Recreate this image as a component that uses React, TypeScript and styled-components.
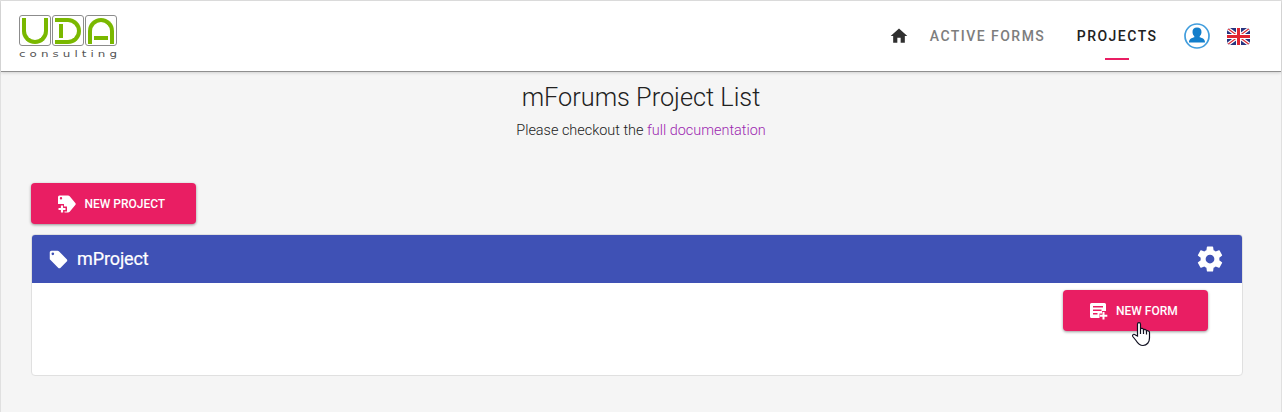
import React from "react";
import styled, { createGlobalStyle } from "styled-components";

const Global = createGlobalStyle`
  * { box-sizing: border-box; }
  body { margin: 0; background: #f5f5f5; font-family: Roboto, "Liberation Sans", sans-serif; overflow: hidden; }
`;

const Page = styled.div`
  height: 412px;
  border: 1px solid #e0e0e0;
  border-bottom: 0;
  background: #f5f5f5;
`;

const Header = styled.header`
  height: 71px;
  display: flex;
  align-items: center;
  justify-content: space-between;
  padding: 0 31px 0 18px;
  background: #fff;
  border-bottom: 1px solid #8f8f8f;
  box-shadow: 0 1px 3px rgba(0, 0, 0, 0.15);
`;

const Logo = styled.div`
  display: flex;
  flex-direction: column;
  width: 98px;
  height: 46px;
  margin-top: 4px;
`;

const LogoTiles = styled.div`
  display: flex;
  gap: 1px;
`;

const Tile = styled.div`
  width: 32px;
  height: 31px;
  padding: 2px;
  border: 1px solid #8c8c8c;
  border-radius: 3px;
`;

const Stroke = styled.div<{ $kind: "u" | "d" | "a" }>`
  width: 26px;
  height: 26px;
  display: flex;
  border: 4px solid #7ab800;
  ${({ $kind }) => $kind === "u" && "border-top: 0; border-radius: 0 0 13px 13px;"}
  ${({ $kind }) => $kind === "d" && "border-left: 0; border-radius: 0 13px 13px 0; padding: 2px 0 0 4px;"}
  ${({ $kind }) => $kind === "a" && "border-bottom: 0; border-radius: 13px 13px 0 0; padding: 14px 0 0 2px;"}
`;

const Bar = styled.span<{ $w: number; $h: number }>`
  width: ${({ $w }) => $w}px;
  height: ${({ $h }) => $h}px;
  background: #7ab800;
`;

const Nav = styled.nav`
  display: flex;
  align-items: center;
  height: 70px;
`;

const NavLink = styled.a<{ $active?: boolean }>`
  position: relative;
  font-size: 14px;
  font-weight: 500;
  line-height: 20px;
  letter-spacing: 1.47px;
  color: ${({ $active }) => ($active ? "#212121" : "#7d7d7d")};
  margin-left: ${({ $active }) => ($active ? 31.5 : 20.5)}px;
  &::after {
    content: "";
    display: ${({ $active }) => ($active ? "block" : "none")};
    position: absolute;
    left: 28px;
    top: 32px;
    width: 24px;
    height: 2px;
    background: #e91e63;
  }
`;

const Avatar = styled.svg`
  margin-left: 26.5px;
`;

const Flag = styled.svg`
  margin-left: 17px;
  border-radius: 4px;
`;

const Intro = styled.section`
  text-align: center;
  height: 111px;
  padding-top: 10px;
`;

const Title = styled.h1`
  margin: 0;
  font-size: 25.3px;
  font-weight: 300;
  line-height: 32px;
  color: #212121;
`;

const Subtitle = styled.p`
  margin: 7px 0 0;
  font-size: 14.45px;
  font-weight: 300;
  line-height: 20px;
  color: #212121;
`;

const DocLink = styled.a`
  color: #9c27b0;
`;

const Content = styled.main`
  padding: 0 38.5px 0 30.4px;
`;

const Button = styled.button<{ $w: number }>`
  display: flex;
  align-items: center;
  width: ${({ $w }) => $w}px;
  height: 41px;
  padding: 0 0 0 25px;
  gap: 6px;
  border: 0;
  border-radius: 4px;
  background: #e91e63;
  color: #fff;
  font: 500 12px Roboto, sans-serif;
  white-space: nowrap;
  box-shadow: 0 1px 3px rgba(0, 0, 0, 0.4);
`;

const Card = styled.section`
  height: 142px;
  margin-top: 10px;
  border: 1px solid #e0e0e0;
  border-radius: 4px;
  background: #fff;
  overflow: hidden;
`;

const CardHeader = styled.header`
  display: flex;
  align-items: center;
  height: 48px;
  padding: 0 17px 0 16px;
  background: #3f51b5;
  color: #fff;
`;

const CardTitle = styled.h2`
  flex: 1;
  margin: 0 0 0 7.7px;
  font-size: 18px;
  font-weight: 400;
  line-height: 24px;
  letter-spacing: -0.12px;
  -webkit-text-stroke: 0.2px #fff;
`;

const CardBody = styled.div`
  display: flex;
  justify-content: flex-end;
  padding: 7px 33.5px 0 0;
`;

const Pointer = styled.svg`
  position: absolute;
  left: 1131px;
  top: 321px;
`;

const TAG =
  "M5.5,7A1.5,1.5 0 0,1 4,5.5A1.5,1.5 0 0,1 5.5,4A1.5,1.5 0 0,1 7,5.5A1.5,1.5 0 0,1 5.5,7M21.41,11.58L12.41,2.58C12.05,2.22 11.55,2 11,2H4C2.89,2 2,2.89 2,4V11C2,11.55 2.22,12.05 2.59,12.41L11.58,21.41C11.95,21.77 12.45,22 13,22C13.55,22 14.05,21.77 14.41,21.41L21.41,14.41C21.78,14.05 22,13.55 22,13C22,12.44 21.77,11.94 21.41,11.58Z";
const COG =
  "M12,15.5A3.5,3.5 0 0,1 8.5,12A3.5,3.5 0 0,1 12,8.5A3.5,3.5 0 0,1 15.5,12A3.5,3.5 0 0,1 12,15.5M19.43,12.97C19.47,12.65 19.5,12.33 19.5,12C19.5,11.67 19.47,11.34 19.43,11L21.54,9.37C21.73,9.22 21.78,8.95 21.66,8.73L19.66,5.27C19.54,5.05 19.27,4.96 19.05,5.05L16.56,6.05C16.04,5.66 15.5,5.32 14.87,5.07L14.5,2.42C14.46,2.18 14.25,2 14,2H10C9.75,2 9.54,2.18 9.5,2.42L9.13,5.07C8.5,5.32 7.96,5.66 7.44,6.05L4.95,5.05C4.73,4.96 4.46,5.05 4.34,5.27L2.34,8.73C2.21,8.95 2.27,9.22 2.46,9.37L4.57,11C4.53,11.34 4.5,11.67 4.5,12C4.5,12.33 4.53,12.65 4.57,12.97L2.46,14.63C2.27,14.78 2.21,15.05 2.34,15.27L4.34,18.73C4.46,18.95 4.73,19.03 4.95,18.95L7.44,17.94C7.96,18.34 8.5,18.68 9.13,18.93L9.5,21.58C9.54,21.82 9.75,22 10,22H14C14.25,22 14.46,21.82 14.5,21.58L14.87,18.93C15.5,18.67 16.04,18.34 16.56,17.94L19.05,18.95C19.27,19.03 19.54,18.95 19.66,18.73L21.66,15.27C21.78,15.05 21.73,14.78 21.54,14.63L19.43,12.97Z";

export default function App() {
  return (
    <Page>
      <Global />
      <Header>
        <Logo>
          <LogoTiles role="img" aria-label="UDA">
            <Tile><Stroke $kind="u" /></Tile>
            <Tile><Stroke $kind="d"><Bar $w={4} $h={14} /></Stroke></Tile>
            <Tile><Stroke $kind="a"><Bar $w={14} $h={4} /></Stroke></Tile>
          </LogoTiles>
          <svg width="98" height="15" viewBox="0 0 98 15">
            <text transform="translate(0 11.3) scale(1.4 1)" fontFamily="DejaVu Sans" fontSize="8.5" fill="#555" textLength="70">consulting</text>
          </svg>
        </Logo>
        <Nav>
          <svg width="20" height="20" viewBox="0 0 24 24" fill="#303030">
            <path d="M10,20V14H14V20H19V12H22L12,3L2,12H5V20H10Z" />
          </svg>
          <NavLink>ACTIVE FORMS</NavLink>
          <NavLink $active>PROJECTS</NavLink>
          <Avatar width="26" height="26" viewBox="0 0 26 26">
            <circle cx="13" cy="13" r="12" fill="#fff" stroke="#409ddd" strokeWidth="1.7" />
            <path d="M13 4.500c3 0 4.700 2 4.500 4.700-.1 1.800-1 3.200-1.800 4v1c2.700.8 5.300 1.600 5.300 5.300H5c0-3.700 2.600-4.500 5.300-5.300v-1c-.8-.8-1.700-2.200-1.800-4-.2-2.700 1.500-4.700 4.500-4.700z" fill="#127ecb" />
          </Avatar>
          <Flag width="23" height="17" viewBox="0 0 23 17">
            <rect width="23" height="17" fill="#28347f" />
            <path d="M0 0L23 17M23 0L0 17" stroke="#fff" strokeWidth="3.600" />
            <path d="M0 0L23 17M23 0L0 17" stroke="#dc2b35" strokeWidth="1.200" />
            <path d="M11.500 0V17M0 8.500H23" stroke="#fff" strokeWidth="5" />
            <path d="M11.500 0V17M0 8.500H23" stroke="#e02430" strokeWidth="3" />
          </Flag>
        </Nav>
      </Header>
      <Intro>
        <Title>mForums Project List</Title>
        <Subtitle>Please checkout the <DocLink>full documentation</DocLink></Subtitle>
      </Intro>
      <Content>
        <Button $w={164.5}>
          <svg width="22" height="22" viewBox="0 0 22 22">
            <path fillRule="evenodd" fill="#fff" d="M3.500 2.500H12Q13 2.500 13.700 3.300L19.500 10.300Q20 11 19.500 11.700L13.700 18.700Q13 19.500 12 19.500H2V4Q2 2.500 3.500 2.500ZM5 4A1.200 1.200 0 1 0 5 6.400A1.200 1.200 0 1 0 5 4Z" />
            <path d="M0 11H8V13.500H11V18.500H8.500V21H0Z" fill="#e91e63" />
            <path d="M6 12.500V19.500M2.500 16H9.500" stroke="#fff" strokeWidth="2.200" />
          </svg>
          NEW PROJECT
        </Button>
        <Card>
          <CardHeader>
            <svg width="21" height="21" viewBox="0 0 24 24" fill="#fff"><path d={TAG} /></svg>
            <CardTitle>mProject</CardTitle>
            <svg width="30" height="30" viewBox="0 0 24 24" fill="#fff"><path d={COG} /></svg>
          </CardHeader>
          <CardBody>
            <Button $w={145}>
              <svg width="22" height="22" viewBox="0 0 22 22">
                <path fillRule="evenodd" fill="#fff" d="M3.500 3H16.500Q18 3 18 4.500V11H14V13.500H11.500V18H3.500Q2 18 2 16.500V4.500Q2 3 3.500 3ZM5 6V7.500H15V6ZM5 9.500V11H13.500V9.500ZM5 13V14.500H9.500V13Z" />
                <path d="M15.500 12V19.500M11.800 15.700H19.300" stroke="#fff" strokeWidth="2" />
              </svg>
              NEW FORM
            </Button>
          </CardBody>
        </Card>
      </Content>
      <Pointer width="20" height="26" viewBox="0 0 20 26">
        <path d="M6.500 15V3.200C6.500 1.200 9.500 1.200 9.500 3.200V8C10 7 12.500 7.200 12.500 9C13.500 8 15.500 8.500 15.500 10C16.500 9.300 18.500 10 18.500 11.500V17C18.500 21 16 24.500 12 24.500C8 24.500 6.500 22 5 19.500L1.800 15.500C.8 13.500 3 12.500 4.500 14Z" fill="#fff" stroke="#101020" strokeWidth="1.200" />
        <path d="M9.500 8V13M12.500 9V13M15.500 10V13.500" stroke="#101020" strokeWidth="1.200" />
      </Pointer>
    </Page>
  );
}
